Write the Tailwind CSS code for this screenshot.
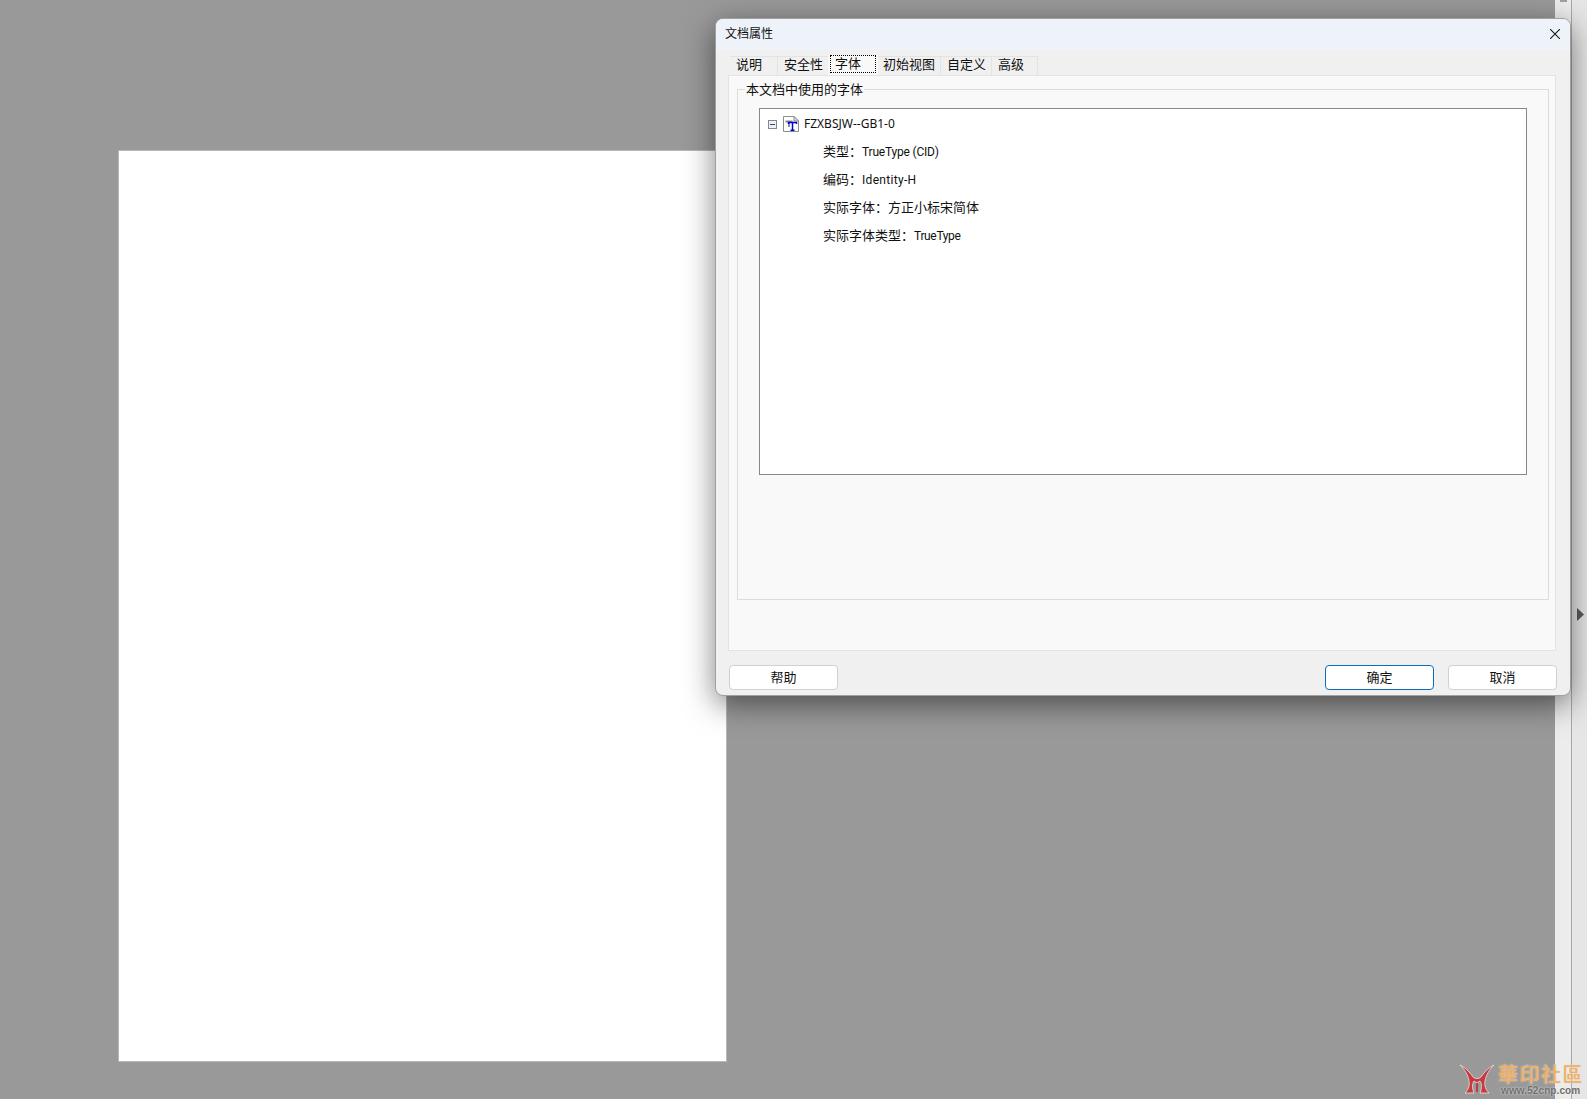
<!DOCTYPE html>
<html lang="zh-CN">
<head>
  <meta charset="UTF-8">
  <title>文档属性</title>
  <script src="https://cdn.jsdelivr.net/npm/@tailwindcss/browser@4"></script>
</head>
<body class="relative h-[1099px] w-[1587px] overflow-hidden bg-[#999999] font-['Roboto','Noto_Sans_CJK_SC',sans-serif] text-[13px] text-[#111111]">
  <div class="flex h-full">
    <!-- Document area -->
    <main class="h-full w-[1555px] pl-[119px] pt-[151px]">
      <div class="h-[910px] w-[607px] bg-white outline outline-1 outline-[#b8b8b8]"></div>
    </main>

    <!-- Scrollbar -->
    <div class="h-full w-[17px] border-r border-[#a8a8a8] bg-[#ececec] pl-[5px]">
      <div class="h-[2px] w-[7px] bg-[#a0a0a0]"></div>
    </div>

    <!-- Collapsed side pane -->
    <div class="flex h-full w-[15px] items-center bg-[#e6e6e6] pl-[5px]">
      <svg class="mt-[129px]" width="7" height="13" viewBox="0 0 7 13"><path d="M0 0L7 6.5L0 13Z" fill="#5a5a5a"/></svg>
    </div>
  </div>

  <!-- Dialog -->
  <section class="absolute left-[715px] top-[18px] flex h-[678px] w-[856px] flex-col overflow-hidden rounded-[8px] border border-[#a0a0a0] bg-[#f0f0f0] shadow-[0_8px_30px_rgba(0,0,0,0.5)]">
    <header class="flex h-[31px] shrink-0 items-center justify-between bg-[#eef3fa] pb-[2px] pl-[9px] pr-[10px] text-[12px]">
      <span>文档属性</span>
      <svg width="10" height="10" viewBox="0 0 10 10"><path d="M0 0L10 10M10 0L0 10" stroke="#1a1a1a" stroke-width="1.1" fill="none"/></svg>
    </header>

    <!-- Tabs -->
    <nav class="flex h-[25px] shrink-0 items-end pl-[14px]">
      <div class="flex h-[19px] w-[48px] items-center border-r border-t border-[#e3e3e3] pb-[3px] pl-[6px]">说明</div>
      <div class="flex h-[19px] w-[50px] items-center border-t border-[#e3e3e3] pb-[3px] pl-[6px]">安全性</div>
      <div class="flex h-[20px] w-[50px] items-start bg-[#f9f9f9] px-[2px]">
        <div class="flex h-[18px] w-[46px] items-center border border-dotted border-black pl-[4px]">字体</div>
      </div>
      <div class="flex h-[19px] w-[63px] items-center border-r border-t border-[#e3e3e3] pb-[3px] pl-[5px]">初始视图</div>
      <div class="flex h-[19px] w-[51px] items-center border-r border-t border-[#e3e3e3] pb-[3px] pl-[6px]">自定义</div>
      <div class="flex h-[19px] w-[46px] items-center border-r border-t border-[#e3e3e3] pb-[3px] pl-[6px]">高级</div>
    </nav>

    <!-- Tab panel -->
    <div class="ml-[12px] mr-[14px] h-[576px] shrink-0 border border-[#e3e3e3] bg-[#f9f9f9] pl-[8px] pr-[6px] pt-[4px]">
      <fieldset class="h-[520px] border border-[#dcdcdc] pl-[21px] pr-[21px]">
        <legend class="ml-[-14px] h-[18px] px-[1px] leading-[20px]">本文档中使用的字体</legend>
        <div class="mt-[10px] h-[367px] border border-[#85888f] bg-white pt-[1px]">
          <div class="flex h-7 items-center pl-[8px]">
            <svg width="9" height="9" viewBox="0 0 9 9"><rect x="0.5" y="0.5" width="8" height="8" fill="#eef0f4" stroke="#7f8794"/><path d="M2 4.5H7" stroke="#3a4658"/></svg>
            <svg class="ml-[6px]" width="16" height="16" viewBox="0 0 16 16">
              <path d="M0.5 0.5H11L15.5 5V15.5H0.5Z" fill="#ffffff" stroke="#8c8c8c"/>
              <path d="M11 0.5V5H15.5Z" fill="#e4e4e4" stroke="#8c8c8c"/>
              <path d="M2.5 5.5H9.5M6 5.5V11" stroke="#8a8a8a" stroke-width="2" fill="none"/>
              <path d="M5.5 8V6.5H13.5V8M9.5 6.5V14M7.5 14.2H11.5" stroke="#0000e0" stroke-width="1.5" fill="none"/>
            </svg>
            <span class="ml-[5px] font-['Noto_Sans',sans-serif] text-[12px]">FZXBSJW--GB1-0</span>
          </div>
          <div class="flex h-7 items-center pl-[63px]">类型：<span class="text-[12px] tracking-[-0.2px]">TrueType (CID)</span></div>
          <div class="flex h-7 items-center pl-[63px]">编码：<span class="text-[12px] tracking-[0.3px]">Identity-H</span></div>
          <div class="flex h-7 items-center pl-[63px]">实际字体：方正小标宋简体</div>
          <div class="flex h-7 items-center pl-[63px]">实际字体类型：<span class="text-[12px] tracking-[-0.35px]">TrueType</span></div>
        </div>
      </fieldset>
    </div>

    <!-- Buttons -->
    <footer class="flex justify-between pl-[13px] pr-[13px] pt-[14px]">
      <button class="h-[25px] w-[109px] rounded-[4px] border border-[#d0d0d0] bg-white">帮助</button>
      <div class="flex gap-[14px]">
        <button class="h-[25px] w-[109px] rounded-[4px] border border-[#0f6cbd] bg-white">确定</button>
        <button class="h-[25px] w-[109px] rounded-[4px] border border-[#d0d0d0] bg-white">取消</button>
      </div>
    </footer>
  </section>

  <!-- Watermark -->
  <div class="absolute left-[1459px] top-[1063px] flex items-start">
    <svg width="36" height="31" viewBox="0 0 36 31">
      <path d="M1 2C5 4 10 8 14 14C16 16 20 16 22 14C26 8 31 4 35 2C30 7 27 12 26 18C25 23 27 27 30 30L21 30C23 25 23 21 21 18L18 20L15 18C13 21 13 25 15 30L6 30C9 27 11 23 10 18C9 12 6 7 1 2Z" fill="#c8393d" stroke="#e4e4e4" stroke-width="0.8"/>
      <path d="M17 20H19V29H17Z" fill="#c8393d"/>
    </svg>
    <div class="ml-[3px] flex flex-col">
      <span class="h-[22px] text-[20px] font-medium leading-[22px] tracking-[1.5px] text-[#f2b060] font-['Noto_Sans_CJK_TC',sans-serif] [text-shadow:0_0_2px_#d9d9d9]">華印社區</span>
      <span class="ml-[3px] text-[10px] font-bold leading-[11px] tracking-[0.1px] text-[#6f6f6f] font-['Liberation_Sans',sans-serif] [text-shadow:0_0_2px_#eeeeee]">www.52cnp.com</span>
    </div>
  </div>
</body>
</html>
